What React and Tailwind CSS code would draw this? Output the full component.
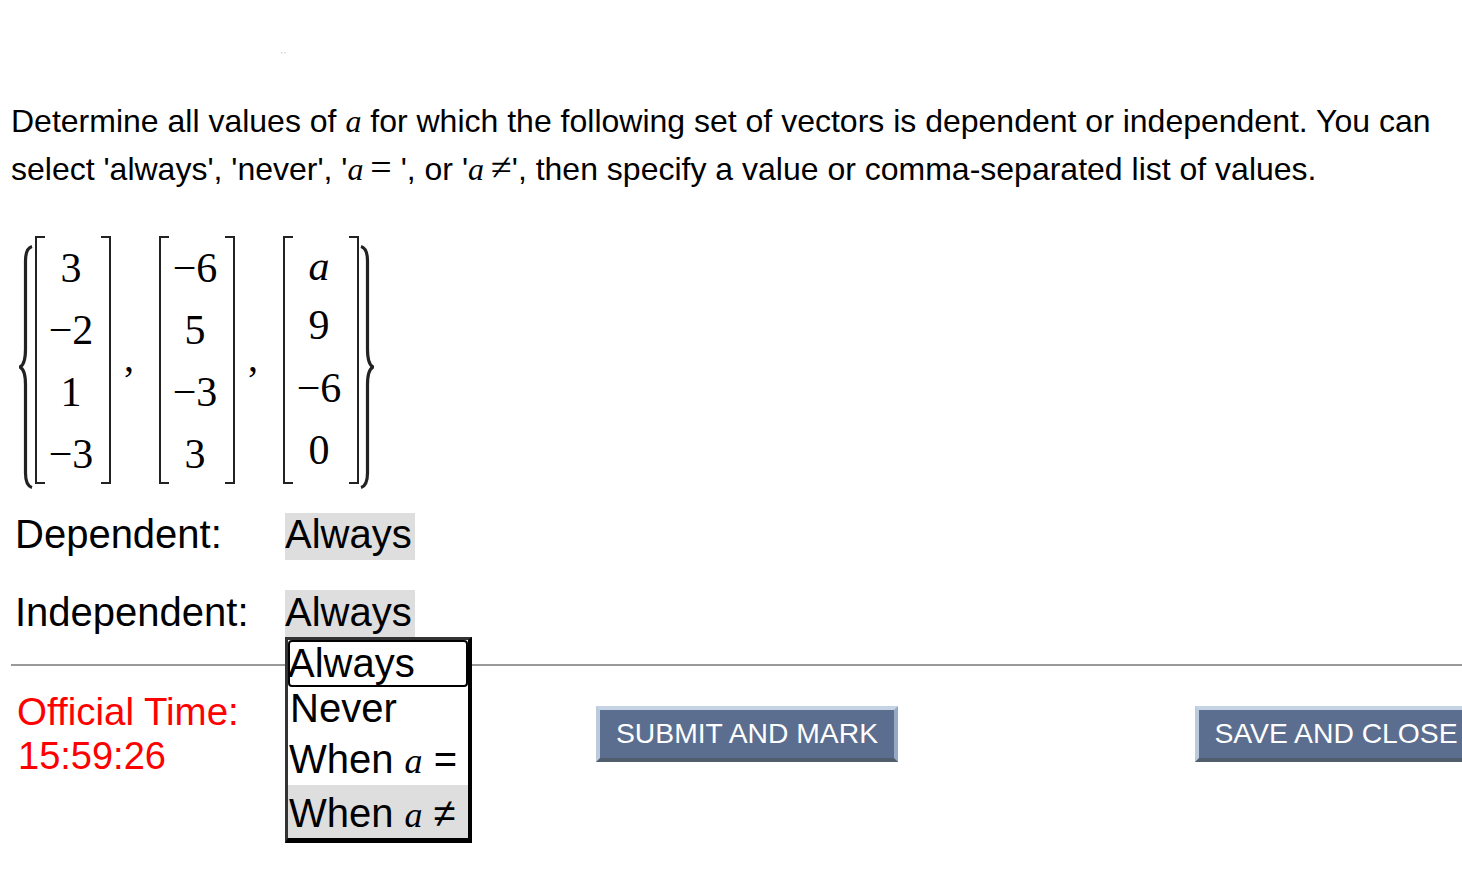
const serif = "font-['Liberation_Serif',serif]";

const Brace = ({ flip }) => (
  <svg viewBox="0 0 14 244" className={`w-[14px] h-[244px] ${flip ? '-scale-x-100' : ''}`} fill="none" stroke="#222">
    <path d="M13 1.5 C8 3 6.5 8 6.5 16 L6.5 104 C6.5 114 5 120 1 122 C5 124 6.5 130 6.5 140 L6.5 228 C6.5 236 8 241 13 242.5" strokeWidth="3.2" />
  </svg>
);

const Matrix = ({ rows }) => (
  <div className="flex h-[248px] w-[76px] shrink-0">
    <div className="w-[10px] border-y-2 border-l-2 border-[#222]" />
    <div className={`flex-1 flex flex-col items-center pt-px pr-[4px] text-[42px] ${serif}`}>
      {rows.map(([text, cls], i) => (
        <div key={i} className={`flex items-center ${cls}`}>
          {text}
        </div>
      ))}
    </div>
    <div className="w-[10px] border-y-2 border-r-2 border-[#222]" />
  </div>
);

const Comma = () => <div className={`w-[48px] shrink-0 pr-[12px] pt-[102px] text-center text-[40px] leading-none ${serif}`}>,</div>;

const Var = ({ children, className = 'text-[1em]' }) => <i className={`${serif} ${className}`}>{children}</i>;

const BevelButton = ({ children, className }) => (
  <button className={`h-[56px] shrink-0 pb-[2px] bg-[#5b6e8f] text-white text-[28.3px] whitespace-nowrap border-[4px] border-t-[#c5d4e5] border-l-[#bccbdc] border-r-[#94a9c3] border-b-[#4f5d6c] ${className}`}>
    {children}
  </button>
);

export default function App() {
  return (
    <div className="relative w-[1462px] h-[884px] overflow-hidden bg-white text-black pl-[11px] pt-[97px] font-['Liberation_Sans',sans-serif]">
      <span className="absolute left-[281px] top-[51px] text-[7px] leading-[8px] text-[#999]">' '</span>

      <p className="text-[32px] leading-[48px] whitespace-nowrap">
        Determine all values of <Var>a</Var> for which the following set of vectors is dependent or independent. You can
        <br />
        select 'always', 'never', '<Var>a</Var> <span className={`${serif} -ml-[2px] text-[38px] leading-none`}>=</span> ', or '<Var>a</Var> <span className={`${serif} -ml-[2px] text-[38px] leading-none`}>≠</span>', then specify a value or comma-separated list of values.
      </p>

      <div className="flex items-start mt-[43px] ml-[8px] h-[253px]">
        <div className="mt-[9px] mr-[2px]"><Brace /></div>
        <Matrix rows={[['3', 'h-[62px]'], ['−2', 'h-[62px]'], ['1', 'h-[62px]'], ['−3', 'h-[62px]']]} />
        <Comma />
        <Matrix rows={[['−6', 'h-[62px]'], ['5', 'h-[62px]'], ['−3', 'h-[62px]'], ['3', 'h-[62px]']]} />
        <Comma />
        <Matrix
          rows={[
            [<i key="a">a</i>, 'h-[58px]'],
            ['9', 'h-[60px]'],
            ['−6', 'h-[67px]'],
            ['0', 'h-[56px]'],
          ]}
        />
        <div className="mt-[9px] ml-[1px]"><Brace flip /></div>
      </div>

      <div className="grid grid-cols-[270px_130px] gap-y-[30px] ml-[4px] mt-[24px] text-[40px] leading-[43px]">
        <div className="h-[47px]">Dependent:</div>
        <div className="h-[47px] bg-[#dedede]">Always</div>
        <div className="h-[47px] leading-[45px]">Independent:</div>
        <div className="relative h-[47px] leading-[45px] bg-[#dedede]">
          Always
          <div className="absolute left-0 top-[47px] z-10 w-[187px] h-[206px] bg-white border-t-[3px] border-l-[3px] border-r-4 border-b-[5px] border-t-[#333] border-l-[#333] border-r-black border-b-black">
            <div className="h-[47px] leading-[47px] rounded-[4px] shadow-[inset_0_0_0_2px_#000,inset_0_0_0_3px_#fff]">Always</div>
            <div className="h-[46px] leading-[43px] pl-[2px]">Never</div>
            <div className="h-[52px] leading-[52px] pl-px whitespace-nowrap">When <Var className="text-[36px]">a</Var> =</div>
            <div className="h-[53px] leading-[56px] pl-px bg-[#dedede] whitespace-nowrap">When <Var className="text-[36px]">a</Var> ≠</div>
          </div>
        </div>
      </div>

      <hr className="mt-[27px] border-0 h-[2px] bg-[#999]" />

      <div className="flex items-start mt-[25px]">
        <div className="w-[585px] shrink-0 -mt-px pl-[6px] text-[#ff0000] text-[38px] leading-[44px]">
          <div className="text-[38.5px]">Official Time:</div>
          <div className="pl-px">15:59:26</div>
        </div>
        <BevelButton className="w-[302px] mt-[15px]">SUBMIT AND MARK</BevelButton>
        <BevelButton className="w-[282px] mt-[15px] ml-[297px]">SAVE AND CLOSE</BevelButton>
      </div>
    </div>
  );
}
